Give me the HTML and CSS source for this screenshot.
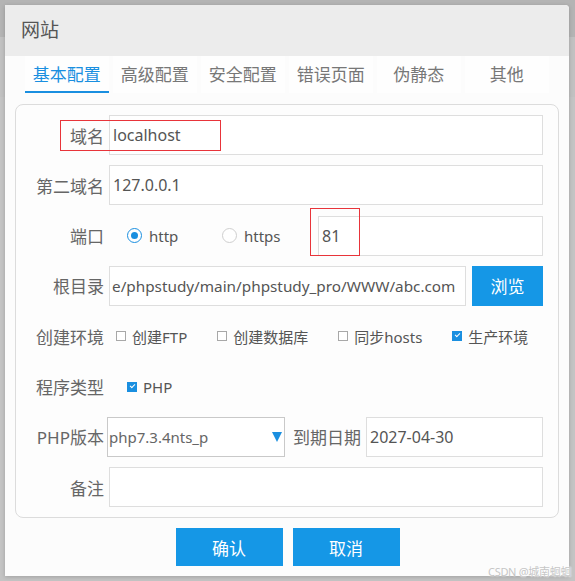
FILE: index.html
```html
<!DOCTYPE html>
<html lang="zh-CN">
<head>
<meta charset="utf-8">
<title>网站</title>
<link rel="stylesheet" href="styles.css">
</head>
<body>
<div class="dialog">
  <div class="header">网站</div>
  <div class="tabs">
    <div class="tab active">基本配置</div>
    <div class="tab">高级配置</div>
    <div class="tab">安全配置</div>
    <div class="tab">错误页面</div>
    <div class="tab">伪静态</div>
    <div class="tab">其他</div>
  </div>
  <div class="panel">
    <div class="row">
      <div class="lbl">域名</div>
      <div class="field">localhost</div>
    </div>
    <div class="row">
      <div class="lbl">第二域名</div>
      <div class="field">127.0.0.1</div>
    </div>
    <div class="row">
      <div class="lbl">端口</div>
      <div class="radios">
        <div class="radio"><span class="dot on"></span><span class="rtext">http</span></div>
        <div class="radio"><span class="dot"></span><span class="rtext">https</span></div>
      </div>
      <div class="field port">81</div>
    </div>
    <div class="row">
      <div class="lbl">根目录</div>
      <div class="field path">e/phpstudy/main/phpstudy_pro/WWW/abc.com</div>
      <div class="btn browse">浏览</div>
    </div>
    <div class="row">
      <div class="lbl">创建环境</div>
      <div class="checks env">
        <div class="check"><span class="box"></span><span class="ctext">创建FTP</span></div>
        <div class="check"><span class="box"></span><span class="ctext">创建数据库</span></div>
        <div class="check"><span class="box"></span><span class="ctext">同步hosts</span></div>
        <div class="check"><span class="box on"></span><span class="ctext">生产环境</span></div>
      </div>
    </div>
    <div class="row">
      <div class="lbl">程序类型</div>
      <div class="checks prog">
        <div class="check"><span class="box on"></span><span class="ctext">PHP</span></div>
      </div>
    </div>
    <div class="row">
      <div class="lbl">PHP版本</div>
      <div class="select"><span class="stext">php7.3.4nts_p</span><span class="arrow"></span></div>
      <div class="lbl2">到期日期</div>
      <div class="field">2027-04-30</div>
    </div>
    <div class="row">
      <div class="lbl">备注</div>
      <div class="field"></div>
    </div>
  </div>
  <div class="actions">
    <div class="btn action">确认</div>
    <div class="btn action">取消</div>
  </div>
  <div class="mark mark-domain"></div>
  <div class="mark mark-port"></div>
</div>
<div class="watermark">CSDN @城南蛔蛔</div>
</body>
</html>
```

FILE: styles.css
```css
html, body {
  margin: 0;
  padding: 0;
}
body {
  width: 575px;
  height: 581px;
  overflow: hidden;
  position: relative;
  background: linear-gradient(#b4b4b4 0, #b4b4b4 37px, #c1c1c1 37px, #c1c1c1 97px, #c4c4c4 97px);
  font-family: "Noto Sans", "Noto Sans CJK SC", sans-serif;
}
.dialog {
  position: relative;
  margin: 5px 0 0 5px;
  width: 564px;
  height: 571px;
  background: #fcfcfc;
  border-top-right-radius: 4px;
  box-shadow: 0 1px 4px rgba(0, 0, 0, 0.18);
  display: flex;
  flex-direction: column;
}
.header {
  height: 51px;
  line-height: 51px;
  background: #ececec;
  border-top-right-radius: 4px;
  padding-left: 16px;
  font-size: 19px;
  color: #555;
}
.tabs {
  display: flex;
  gap: 4.5px;
  margin-left: 20px;
}
.tab {
  width: 83.5px;
  height: 32px;
  padding-top: 3px;
  line-height: 32px;
  text-align: center;
  font-size: 17px;
  color: #777;
  background: #fefefe;
  border-bottom: 2px solid transparent;
}
.tab.active {
  color: #1a8fe0;
  border-bottom-color: #1a8fe0;
}
.panel {
  box-sizing: border-box;
  width: 544px;
  margin: 11px 0 0 10px;
  border: 1px solid #dcdcdc;
  border-radius: 8px;
  background: #fdfdfd;
  padding: 10px 15px 10px 0;
  display: flex;
  flex-direction: column;
  gap: 10.33px;
}
.row {
  display: flex;
  align-items: center;
  height: 40px;
}
.lbl {
  width: 88px;
  flex: none;
  text-align: right;
  font-size: 17px;
  color: #666;
  margin-right: 5px;
}
.field {
  box-sizing: border-box;
  flex: 1;
  height: 40px;
  border: 1px solid #dedede;
  background: #fff;
  padding: 0 3px;
  display: flex;
  align-items: center;
  font-size: 16px;
  color: #555;
  overflow: hidden;
  white-space: nowrap;
}
.field.port {
  flex: none;
  width: 225px;
  margin-left: auto;
}
.field.path {
  font-size: 15.3px;
  padding: 0 2px;
}
.radios {
  display: flex;
  margin-left: 18px;
}
.radio {
  width: 95px;
  display: flex;
  align-items: center;
}
.dot {
  box-sizing: border-box;
  width: 15px;
  height: 15px;
  border-radius: 50%;
  border: 1px solid #cfcfcf;
  background: #fff;
  position: relative;
  flex: none;
}
.dot.on {
  border-color: #1a8fe0;
}
.dot.on::after {
  content: "";
  position: absolute;
  left: 3px;
  top: 3px;
  width: 7px;
  height: 7px;
  border-radius: 50%;
  background: #1a8fe0;
}
.rtext {
  margin-left: 7px;
  font-size: 15px;
  color: #555;
}
.checks {
  display: flex;
  gap: 30px;
}
.checks.env {
  margin-left: 7px;
}
.checks.prog {
  margin-left: 18px;
}
.check {
  display: flex;
  align-items: center;
}
.box {
  box-sizing: border-box;
  width: 10px;
  height: 10px;
  border: 1px solid #a8a8a8;
  background: #fff;
  position: relative;
  flex: none;
}
.box.on {
  border-color: #1a8fe0;
  background: #1a8fe0;
}
.box.on::after {
  content: "";
  position: absolute;
  left: 2px;
  top: 1px;
  width: 4px;
  height: 2px;
  border-left: 1px solid #fff;
  border-bottom: 1px solid #fff;
  transform: rotate(-45deg);
}
.ctext {
  margin-left: 6px;
  font-size: 15px;
  color: #555;
}
.btn {
  background: #1597e6;
  color: #fff;
  font-size: 17px;
  display: flex;
  align-items: center;
  justify-content: center;
}
.browse {
  width: 71px;
  height: 40px;
  margin-left: 6px;
  flex: none;
}
.select {
  box-sizing: border-box;
  width: 178px;
  height: 40px;
  margin-left: -2px;
  border: 1px solid #c9c9c9;
  background: #fff;
  display: flex;
  align-items: center;
  padding-left: 1px;
  flex: none;
}
.stext {
  font-size: 15px;
  color: #666;
}
.arrow {
  margin-left: auto;
  margin-right: 2px;
  width: 0;
  height: 0;
  border-left: 5.5px solid transparent;
  border-right: 5.5px solid transparent;
  border-top: 10px solid #1a8fe0;
}
.lbl2 {
  font-size: 17px;
  color: #666;
  margin: 0 5px 0 8px;
  flex: none;
  white-space: nowrap;
}
.actions {
  display: flex;
  justify-content: center;
  gap: 10px;
  margin-top: 10px;
  padding-left: 1px;
}
.action {
  width: 107px;
  height: 38px;
}
.mark {
  position: absolute;
  border: 1px solid #e8343a;
  box-sizing: border-box;
}
.mark-domain {
  left: 55px;
  top: 115px;
  width: 161px;
  height: 31px;
}
.mark-port {
  left: 305px;
  top: 203px;
  width: 50px;
  height: 48px;
}
.watermark {
  position: absolute;
  left: 488px;
  top: 563px;
  font-size: 11px;
  letter-spacing: -0.3px;
  color: #c6c6c6;
  text-shadow: 0 0 2px #fff, 0 0 1px #fff;
  white-space: nowrap;
}
```
